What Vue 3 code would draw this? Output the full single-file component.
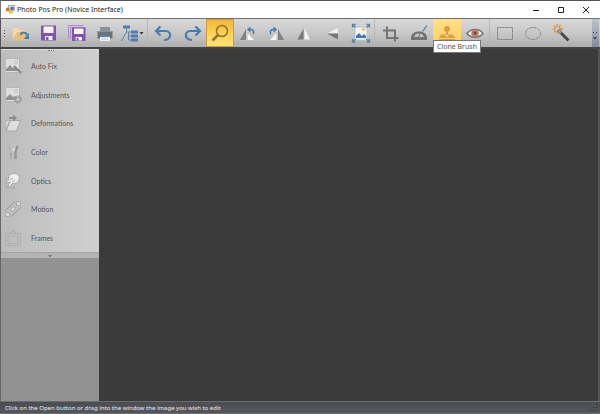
<script setup>
const groups = [
  [
    { id: 'open', label: 'Open' },
    { id: 'save', label: 'Save' },
    { id: 'saveall', label: 'Save All' },
    { id: 'print', label: 'Print' },
    { id: 'tree', label: 'Layout' },
  ],
  [
    { id: 'undo', label: 'Undo' },
    { id: 'redo', label: 'Redo' },
    { id: 'zoom', label: 'Zoom', active: true },
    { id: 'rotl', label: 'Rotate Left' },
    { id: 'rotr', label: 'Rotate Right' },
    { id: 'fliph', label: 'Flip Horizontal' },
    { id: 'flipv', label: 'Flip Vertical' },
    { id: 'fit', label: 'Resize' },
  ],
  [
    { id: 'crop', label: 'Crop' },
    { id: 'angle', label: 'Straighten' },
    { id: 'clone', label: 'Clone Brush', hover: true, tip: 'Clone Brush' },
    { id: 'eye', label: 'Red Eye' },
  ],
  [
    { id: 'rect', label: 'Rectangle Selection' },
    { id: 'ellipse', label: 'Ellipse Selection' },
    { id: 'wand', label: 'Magic Wand' },
  ],
]
const panels = ['Auto Fix', 'Adjustments', 'Deformations', 'Color', 'Optics', 'Motion', 'Frames']
</script>

<template>
  <div class="window">
    <header class="title">
      <svg class="app-icon" viewBox="0 0 10 10">
        <rect x="2.5" y=".5" width="7" height="6" fill="#e8edf2" stroke="#8b98a8" stroke-width=".8" />
        <rect x="0" y="3" width="4" height="4" fill="#d8792d" />
        <rect x="5" y="2" width="3.500" height="3.500" fill="#3e6cb4" />
        <rect x="3.5" y="6" width="4" height="3.5" fill="#ecc04a" />
      </svg>
      <h1>Photo Pos Pro (Novice Interface)</h1>
      <div class="controls">
        <button aria-label="Minimize"><svg viewBox="0 0 8 8"><path d="M1 4.5h6" /></svg></button>
        <button aria-label="Maximize"><svg viewBox="0 0 8 8"><path d="M1.5 1.5h5v5h-5z" /></svg></button>
        <button aria-label="Close"><svg viewBox="0 0 8 8"><path d="M1 1l6 6M7 1l-6 6" /></svg></button>
      </div>
    </header>

    <nav class="toolbar">
      <span class="grip"><i></i><i></i><i></i></span>
      <div v-for="(g, gi) in groups" :key="gi" class="group">
        <button v-for="t in g" :key="t.id" class="tool" :class="{ active: t.active, hover: t.hover }" :aria-label="t.label">
          <svg viewBox="0 0 28 28">
            <template v-if="t.id === 'open'">
              <path d="M6 21V9h5l2 2h6v3H10z" fill="#f3d9a5" />
              <path d="M6 21l4-8h10l-2 8z" fill="#e9bf78" />
              <path d="M13.500 16c1-3 5-3.500 6.500 0" fill="none" stroke="#4880b2" stroke-width="2" />
              <path d="M22 14v6h-5.500z" fill="#4880b2" />
            </template>
            <template v-else-if="t.id === 'save'">
              <path d="M6 6.500h15v15H6z" fill="#8054ac" />
              <path d="M8.500 7.500h10v6.500h-10z" fill="#f5f2f8" />
              <path d="M10 17h7.500v4H10z" fill="#f5f2f8" />
              <path d="M11 18h2.500v3H11z" fill="#8054ac" />
            </template>
            <template v-else-if="t.id === 'saveall'">
              <path d="M5.500 19V6.500H20" fill="none" stroke="#a78bc4" />
              <path d="M7.500 20V8.500H22" fill="none" stroke="#a78bc4" />
              <path d="M9 8.500h13.500V22H9z" fill="#8054ac" />
              <path d="M11 9.500h9.500V15H11z" fill="#f5f2f8" />
              <path d="M12.500 18H19v3.500h-6.500z" fill="#f5f2f8" />
              <path d="M13.500 19h2v2.500h-2z" fill="#8054ac" />
            </template>
            <template v-else-if="t.id === 'print'">
              <path d="M9 8h10v4H9z" fill="#8b9095" />
              <path d="M6.500 12h15v7.500h-15z" fill="#6b7177" />
              <path d="M6.500 12h15v1h-15z" fill="#8d9399" />
              <path d="M9 16h10v6H9z" fill="#edf1f5" />
              <path d="M9 16h10v2H9z" fill="#4f82ae" />
              <path d="M10.500 20h7" stroke="#b9c5cf" />
            </template>
            <template v-else-if="t.id === 'tree'">
              <path d="M4 6.500h7v3H4zM12 11.500h7v3h-7zM12 15.500h7v3h-7zM12 19.500h7v3h-7z" fill="#4c7fad" />
              <path d="M7.500 9v4H12M7.500 13l-5 9M9.500 13v8H12M9.500 17H12" fill="none" stroke="#5e86a9" />
              <path d="M20.500 13h4L22.500 15.500z" fill="#333" />
            </template>
            <template v-else-if="t.id === 'undo' || t.id === 'redo'">
              <g :class="{ mirror: t.id === 'redo' }">
                <path d="M6.500 12h9c4 0 5 3 4.500 5s-2.500 4-6 4" fill="none" stroke="#4a7bac" stroke-width="2.200" />
                <path d="M10.500 7.500l-4.500 4.500 4.500 4.500" fill="none" stroke="#4a7bac" stroke-width="2.200" />
              </g>
            </template>
            <template v-else-if="t.id === 'zoom'">
              <circle cx="16" cy="12" r="5.500" fill="none" stroke="#8b733c" stroke-width="1.600" />
              <path d="M12 16l-5.500 5.500" stroke="#8b733c" stroke-width="2.500" />
            </template>
            <template v-else-if="t.id === 'rotl' || t.id === 'rotr'">
              <g :class="{ mirror: t.id === 'rotr' }">
                <path d="M12 10v11H6z" fill="#828282" />
                <path d="M13.500 14v7H20z" fill="#f6f6f6" />
                <path d="M14.500 10.500H17c3 0 3 3 2 4.500" fill="none" stroke="#4a7bac" stroke-width="1.500" />
                <path d="M16.500 7.500v6L13 10.500z" fill="#4a7bac" />
              </g>
            </template>
            <template v-else-if="t.id === 'fliph'">
              <path d="M13.500 9.500v11H7.500z" fill="#777" /><path d="M14.500 9.500v11H20z" fill="#f4f4f4" />
            </template>
            <template v-else-if="t.id === 'flipv'">
              <path d="M20 9v5.500H9z" fill="#f0f0f0" /><path d="M20 20.500v-6H9z" fill="#777" />
            </template>
            <template v-else-if="t.id === 'fit'">
              <path d="M9 8h12v13H9z" fill="#f1f4f6" stroke="#b9c4ce" />
              <path d="M10 19v-2l3-3 3 3 2-2 2 2v2z" fill="#4278aa" />
              <circle cx="17.500" cy="10.500" r="1.500" fill="#f0bc64" />
              <path d="M6.500 8.500V5.500h3M6.500 5.500l3 3M20.500 5.500h3v3M23.500 5.500l-3 3M6.500 20v3h3M6.500 23l3-3M20.500 23h3v-3M23.500 23l-3-3" fill="none" stroke="#5586b2" stroke-width="1.300" />
            </template>
            <template v-else-if="t.id === 'crop'">
              <path d="M10 7.500v11.500h11.500M6 11.500h12V22.500" fill="none" stroke="#747474" stroke-width="2" />
            </template>
            <template v-else-if="t.id === 'angle'">
              <path fill-rule="evenodd" d="M6 21v-2c0-4 3-6.500 8-6.500s8 2.500 8 6.500v2zM9 18h10c-1-2.500-2.500-3.500-5-3.500S10 15.500 9 18z" fill="#737373" />
              <path d="M13.500 18L15 14" stroke="#737373" />
              <path d="M17.500 12.500l4.500-6" stroke="#4c7da9" stroke-width="1.200" />
            </template>
            <template v-else-if="t.id === 'clone'">
              <circle cx="14" cy="10" r="3" fill="#dc9f47" />
              <path d="M13 12h2v3.500h5l2 3.500H6l2-3.500h5z" fill="#dc9f47" />
              <path d="M6 20.500h16" stroke="#dc9f47" />
              <path d="M12 16l2 2 2-2z" fill="#ffe3a0" />
            </template>
            <template v-else-if="t.id === 'eye'">
              <path d="M6 14.500C10 9 18 9 22 14.500 18 19.500 10 19.500 6 14.500z" fill="#f5f1ee" stroke="#707070" stroke-width="1.400" />
              <circle cx="14" cy="14" r="3.800" fill="#c07a6e" /><circle cx="14" cy="14" r="1.500" fill="#733f39" />
            </template>
            <rect v-else-if="t.id === 'rect'" x="5.500" y="8.500" width="15" height="12" fill="none" stroke="#858585" stroke-dasharray="2 .5" />
            <ellipse v-else-if="t.id === 'ellipse'" cx="13" cy="14.500" rx="7.500" ry="6" fill="none" stroke="#858585" stroke-dasharray="2 .7" />
            <template v-else-if="t.id === 'wand'">
              <circle cx="9.500" cy="10" r="3.800" fill="none" stroke="#dc9450" stroke-width="2.500" stroke-dasharray="1.300 1.450" />
              <circle cx="9.500" cy="10" r="2.600" fill="#dccab8" stroke="#dc9450" />
              <path d="M10 11l10.500 10.500" stroke="#484848" stroke-width="3" />
              <path d="M10 11l3 3" stroke="#999" stroke-width="2.500" />
            </template>
          </svg>
          <span v-if="t.tip" class="tip">{{ t.tip }}</span>
        </button>
      </div>
      <button class="overflow" aria-label="More tools">
        <svg viewBox="0 0 6 28"><path d="M1 13.500h1M4 13.500h1" stroke="#444" /><path d="M1 18h4L3 20.500z" fill="#444" /></svg>
      </button>
    </nav>

    <main class="body">
      <aside class="side">
        <div class="panel">
          <span class="drag"></span>
          <button v-for="(p, i) in panels" :key="p" class="item">
            <svg viewBox="0 0 18 18" fill="none" stroke="#979797">
              <template v-if="i < 2">
                <path d="M1.500 1.500h14v14h-14z" fill="#dedede" stroke="#b6b6b6" />
                <path d="M2 14v-2l4-4 3 3 2-1 4 4z" fill="#919191" stroke="none" />
                <circle cx="12" cy="5" r="1.500" fill="#eee" stroke="#bbb" />
                <path v-if="i === 0" d="M10 9l7 7" stroke="#858585" stroke-width="2" />
                <g v-else><circle cx="14" cy="13.500" r="3.200" stroke-width="2" stroke-dasharray="1.300 1.200" /><circle cx="14" cy="13.500" r="2.200" fill="#ccc" /></g>
              </template>
              <template v-else-if="i === 2">
                <path d="M1 6.500h5l-4.500 10z" fill="#d6d6d6" stroke="#b0b0b0" />
                <path d="M6.500 6.500h10l-4 10.500H2z" fill="#dedede" stroke="#a6a6a6" />
                <path d="M5 3h4V.5L13 4 9 7.500V5H5z" fill="#8c8c8c" stroke="none" />
              </template>
              <template v-else-if="i === 3">
                <path d="M5 3l1.500 5v3" stroke="#b4b4b4" stroke-width="1.500" />
                <path d="M7 10v6" stroke="#a6a6a6" stroke-width="2" />
                <path d="M9.500 5v3" stroke="#dedede" stroke-width="2" />
                <path d="M13.500 3L11.500 9" stroke="#8e8e8e" stroke-width="2" />
                <path d="M11.500 9v7" stroke="#979797" stroke-width="2.500" />
              </template>
              <template v-else-if="i === 4">
                <path d="M2 6v10h9l-2-2M2 16l2-2" stroke="#aaa" />
                <path d="M4 13l2.500-3-3.500.5c-1-1 0-2 1.500-2.500L5 4c1-3 9-3.500 10 0 1 3-1 7-4 7.500L9 11l-3.500 3.500z" fill="#eee" stroke="#ababab" />
                <path d="M6 8l3-2M8 10l3-2" stroke="#b2b2b2" />
              </template>
              <template v-else-if="i === 5">
                <path d="M1 11L11 1M7 17L17 7" stroke="#999" />
                <path d="M1.500 12.500h4v4h-4zM7 7h4v4H7zM12.500 1.500h4v4h-4z" fill="#d9d9d9" stroke="#aaa" />
              </template>
              <template v-else>
                <path d="M1.500 4.500h15v12h-15zM4 7h10v7.500H4z" stroke="#adadad" />
                <path d="M6 4l3-2.500L12 4" stroke="#a2a2a2" />
              </template>
            </svg>
            <span>{{ p }}</span>
          </button>
        </div>
        <button class="collapse" aria-label="Expand panel"><svg viewBox="0 0 6 4"><path d="M1 1h4L3 3.500z" fill="#777" /></svg></button>
      </aside>
      <section class="canvas"></section>
    </main>

    <footer class="status">
      <span>Click on the Open button or drag into the window the image you wish to edit</span>
      <svg viewBox="0 0 8 8" fill="#24262a"><path d="M6 0h1v1H6zM6 3h1v1H6zM6 6h1v1H6zM3 3h1v1H3zM3 6h1v1H3zM0 6h1v1H0z" /></svg>
    </footer>
  </div>
</template>

<style>
body { margin: 0; background: #3b3b3b; }
</style>
<style scoped>
* { box-sizing: border-box; }
.window { min-height: 100vh; display: flex; flex-direction: column; font-family: "Noto Sans", "Open Sans", sans-serif; background: #3b3b3b; }
button { padding: 0; margin: 0; border: 0; background: none; font: inherit; color: inherit; }
svg { display: block; }
.title { height: 18px; display: flex; align-items: center; padding: 0 10px 0 5px; background: #fff; border-top: 1px solid #555; border-left: 1px solid #777; }
.app-icon { width: 9px; height: 9px; }
h1 { margin: 0 0 0 2px; font-size: 7px; font-weight: 400; line-height: 12px; color: #222; }
.controls { margin-left: auto; display: flex; gap: 17px; }
.controls svg { width: 8px; height: 8px; fill: none; stroke: #222; stroke-width: 1; }
.toolbar { height: 31px; display: flex; border-top: 1px solid #70747a; border-bottom: 2px solid #44464a; border-left: 1px solid #555; background: linear-gradient(#d8d8d8, #c8c8c8 50%, #aeaeae); }
.grip { width: 6px; display: flex; flex-direction: column; justify-content: center; align-items: center; gap: 2px; }
.grip i { width: 1px; height: 1px; background: #555; }
.group { display: flex; }
.group + .group { border-left: 1px solid #b8b8b8; padding-left: 2px; }
.tool { width: 28px; height: 28px; position: relative; }
.tool svg { width: 28px; height: 28px; }
.tool.active { background: linear-gradient(#edb23d, #ffd24d 50%, #ffe57d); box-shadow: inset 0 0 0 1px #c99b42; }
.tool.hover { background: linear-gradient(#ffdf8a, #ffcf5c); }
.mirror { transform: translateX(28px) scaleX(-1); }
.tip { position: absolute; top: 21px; left: 0; z-index: 2; padding: 0 3px; font-size: 7px; line-height: 11px; white-space: nowrap; color: #555; background: #fff; border: 1px solid #777; }
.overflow { margin-left: auto; width: 7px; margin-right: 1px; background: linear-gradient(#bcc3cd, #858c98); }
.overflow svg { width: 6px; height: 28px; }
.body { flex: 1; display: flex; }
.side { width: 99px; background: #929292; border-left: 1px solid #666; }
.panel { display: grid; grid-auto-rows: 1fr; min-height: 203px; padding: 2px 0 0 3px; background: linear-gradient(90deg, #bcbcbc, #d0d0d0); border-top: 1px solid #ddd; position: relative; }
.drag { position: absolute; top: 0; left: 47px; width: 6px; border-top: 1px dotted #777; }
.item { display: flex; align-items: center; gap: 9px; text-align: left; font-family: Lato, "Noto Sans", sans-serif; font-size: 7px; color: #555; }
.item svg { width: 18px; height: 18px; }
.collapse { width: 100%; height: 6px; display: flex; justify-content: center; align-items: center; background: #b4b4b4; border-top: 1px solid #a3a3a3; }
.collapse svg { width: 6px; height: 4px; }
.canvas { flex: 1; background: #3b3b3b; border-right: 2px solid #555; }
.status { height: 13px; display: flex; align-items: center; justify-content: space-between; padding: 0 2px 0 5px; border-top: 1px solid #6b6c70; border-bottom: 1px solid #6b6c70; background: linear-gradient(#4b4d52, #54565c); color: #f0f0f0; font-size: 6px; line-height: 10px; }
.status svg { width: 8px; height: 8px; }
</style>
